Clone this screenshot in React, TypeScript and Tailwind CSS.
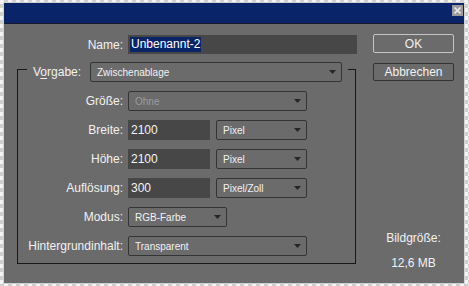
import React from "react";

function Arrow() {
  return (
    <svg width="7" height="4" viewBox="0 0 7 4" className="shrink-0">
      <polygon points="0,0 7,0 3.5,4" fill="#262626" />
    </svg>
  );
}

function Dropdown({ text, className, disabled }: { text: string; className: string; disabled?: boolean }) {
  return (
    <div
      className={
        "flex items-center justify-between h-[20px] rounded-[2px] border border-[#343434] pl-[6px] pr-[5px] text-[10px] " +
        (disabled ? "text-[#9c9c9c] " : "text-[#f2f2f2] ") +
        className
      }
    >
      <span>{text}</span>
      <Arrow />
    </div>
  );
}

function Field({ text }: { text: string }) {
  return (
    <div className="w-[82px] h-[20px] bg-[#474747] flex items-center pl-[3px] text-[12px] text-[#f4f4f4]">{text}</div>
  );
}

function Row({ label, children }: { label: string; children: React.ReactNode }) {
  return (
    <div className="flex items-center h-[20px]">
      <div className="w-[105px] text-right">{label}</div>
      <div className="ml-[5px] flex items-center gap-[6px]">{children}</div>
    </div>
  );
}

export default function App() {
  return (
    <div className="w-[469px] h-[286px] overflow-hidden bg-[repeating-conic-gradient(#cfcfcf_0_25%,#f3f3f3_0_50%)] bg-[length:8px_8px] pt-[2px] pl-[3px] font-['Liberation_Sans',Arial,sans-serif]">
      <div className="w-[462px] h-[282px] border border-[#d2d2d2] flex flex-col">
        <div className="h-[21px] bg-[#0a246a] border-b border-[#15182a] flex justify-end items-start pt-[2px] pr-[1px]">
          <div className="w-[11px] h-[11px] bg-[#9a9a9a] flex items-center justify-center">
            <svg width="7" height="7" viewBox="0 0 7 7">
              <path d="M0.5 0.5L6.5 6.5M6.5 0.5L0.5 6.5" stroke="#e8e8e8" strokeWidth="1.6" />
            </svg>
          </div>
        </div>
        <div className="flex-1 flex bg-[#6b6b6b] pl-[13px] text-[12px] text-[#f2f2f2]">
          <div className="w-[340px] pt-[11px] flex flex-col">
            <div className="flex items-center h-[19px]">
              <div className="w-[106px] text-right">Name:</div>
              <div className="ml-[5px] w-[229px] h-[19px] bg-[#474747] flex items-center pl-[2px]">
                <span className="bg-[#0a246a] px-[1px] leading-[15px] text-white">Unbenannt-2</span>
              </div>
            </div>
            <div className="mt-[15px] w-[339px] border border-[#181818] flex flex-col pb-[7px]">
              <div className="-mt-[8px] ml-[9px] mr-[7px] bg-[#6b6b6b] flex items-center h-[20px] pl-[6px] pr-[6px]">
                <div className="w-[57px]">
                  V<span className="underline underline-offset-2">o</span>rgabe:
                </div>
                <Dropdown text="Zwischenablage" className="flex-1" />
              </div>
              <div className="mt-[9px] flex flex-col gap-[9px]">
                <Row label="Größe:">
                  <Dropdown text="Ohne" className="w-[179px]" disabled />
                </Row>
                <Row label="Breite:">
                  <Field text="2100" />
                  <Dropdown text="Pixel" className="w-[91px]" />
                </Row>
                <Row label="Höhe:">
                  <Field text="2100" />
                  <Dropdown text="Pixel" className="w-[91px]" />
                </Row>
                <Row label="Auflösung:">
                  <Field text="300" />
                  <Dropdown text="Pixel/Zoll" className="w-[91px]" />
                </Row>
                <Row label="Modus:">
                  <Dropdown text="RGB-Farbe" className="w-[99px]" />
                </Row>
                <Row label="Hintergrundinhalt:">
                  <Dropdown text="Transparent" className="w-[179px]" />
                </Row>
              </div>
            </div>
          </div>
          <div className="ml-[16px] w-[81px] flex flex-col pt-[10px] pb-[13px]">
            <div className="h-[19px] border border-[#c6c6c6] rounded-[2px] flex items-center justify-center">OK</div>
            <div className="mt-[10px] h-[18px] border border-[#333333] rounded-[2px] flex items-center justify-center">Abbrechen</div>
            <div className="mt-auto text-center leading-[14px]">Bildgröße:</div>
            <div className="mt-[11px] text-center leading-[14px]">12,6 MB</div>
          </div>
        </div>
      </div>
    </div>
  );
}
